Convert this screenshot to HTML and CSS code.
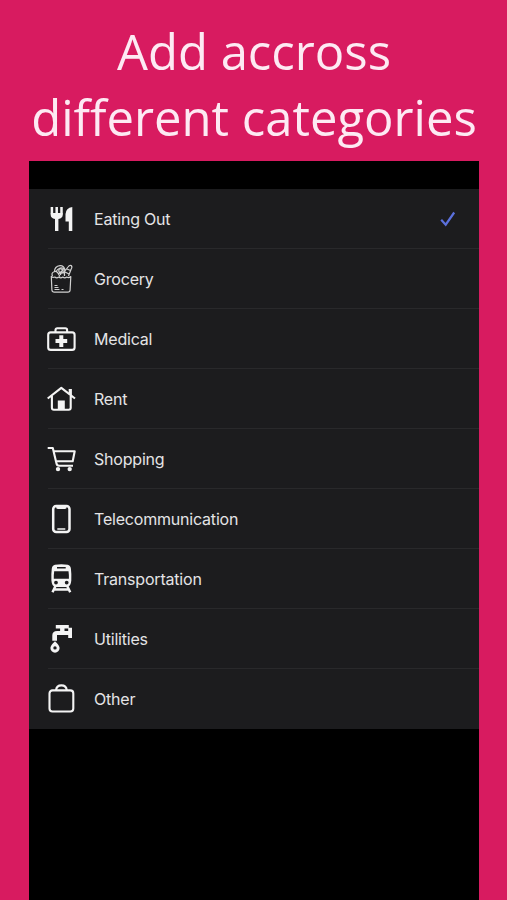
FILE: index.html
```html
<!DOCTYPE html>
<html lang="en">
<head>
<meta charset="utf-8">
<title>Categories</title>
<link rel="stylesheet" href="styles.css">
</head>
<body>
<main class="promo">
<h1 class="headline">Add accross<br>different categories</h1>
<section class="screen">
<ul class="list">
<li class="row">
<svg class="icon" viewBox="0 0 30 30"><path class="stroke heavy" d="M5.900 3V9q0 3.500 4.800 3.500T15.500 9V3M10.700 3V27"/><path class="fill" d="M4.700 9h12v2q0 3-4.300 4v12H9V15q-4.300-1-4.300-4zM26.300 3v24h-3.500V17.500h-3.300V10q.4-6 6.800-7z"/></svg>
<div class="cell"><span class="label">Eating Out</span><svg class="check" viewBox="0 0 16 16"><path d="M1.200 8.700l4.500 5L14.200 1.500"/></svg></div></li>
<li class="row">
<svg class="icon grocery" viewBox="0 0 30 30"><path class="stroke" d="M5.300 12.500l.6 13.500q.2 2.200 2.400 2.200h13.500q2.200 0 2.300-2.200l.7-13.500q-2 2-4 .5-2 1.700-4 0-2 1.700-4 0-2 1.700-4 0-2 1-3.500-.5zM6.500 12q-1.500-3 1.500-4.300 2-1 3.500.8l2.500 4M8.500 7.500q0-5 5.500-5.800Q18 1.500 19 6M10.500 7q2-4 6.500-1l-4.500 4M18.500 12V7.500L22 3q1.500-2.200 3.200-1.500 1.500 1.500-.2 4L22.500 12M21 5l3.500 1.500M19 8l4 2M14.500 11q0-3 2-3 2.500.5 2 4M8.500 21.500h3M8.500 23.500h4M8.500 25.500h5M15.500 25.500h2"/><circle class="stroke" cx="15.500" cy="6.500" r="2.700"/></svg>
<div class="cell"><span class="label">Grocery</span></div></li>
<li class="row">
<svg class="icon" viewBox="0 0 30 30"><rect class="stroke" x="2.200" y="8.400" width="26.400" height="17.500" rx="2.500"/><path class="stroke" d="M9.500 8V6q0-1.800 1.800-1.800h8q1.800 0 1.800 1.800v2"/><path class="fill" d="M13.300 11.300h4v3.700h3.900v4h-3.900v3.900h-4V19H9.500v-4h3.800z"/></svg>
<div class="cell"><span class="label">Medical</span></div></li>
<li class="row">
<svg class="icon" viewBox="0 0 30 30"><path class="stroke" d="M1.700 14.500L15.300 3.800l13.700 10.700M5.900 12v11.800q0 2 2 2h14.800q2 0 2-2V12"/><path class="fill" d="M11.800 16.500h7V26h-7zM22.700 5h3.200v6.500l-3.200-2.500z"/></svg>
<div class="cell"><span class="label">Rent</span></div></li>
<li class="row">
<svg class="icon" viewBox="0 0 30 30"><path class="stroke" d="M1.700 4h5.100l3.700 15.500q.4 2.200 2.500 2.200h14M8 7.200h20.700l-2 10H10.300"/><circle class="fill" cx="12" cy="25.100" r="2.200"/><circle class="fill" cx="23.700" cy="25.100" r="2.200"/></svg>
<div class="cell"><span class="label">Shopping</span></div></li>
<li class="row">
<svg class="icon" viewBox="0 0 30 30"><rect class="stroke heavy" x="7.200" y="2" width="16.300" height="26" rx="3"/><path class="fill" d="M10 2.500h10.700q0 2.500-1.800 2.500h-7Q10 5 10 2.500z"/><path class="stroke thin" d="M11.300 25h8"/></svg>
<div class="cell"><span class="label">Telecommunication</span></div></li>
<li class="row">
<svg class="icon" viewBox="0 0 30 30"><path class="fill" fill-rule="evenodd" d="M9 .8Q15.300-.1 21.700.8q2.700.5 3.200 3.700.7 5 .4 12-.4 5.500-3.900 6.500H9.300q-3.500-1-3.900-6.500-.3-7 .4-12Q6.300 1.300 9 .8zM11 3v1.500h8.700V3zM8.200 7.200q-.6 4-.4 7.600h15.100q.2-3.600-.4-7.600zM10 16.700a1.900 1.900 0 100 3.800 1.900 1.900 0 000-3.800zM20.700 16.700a1.900 1.900 0 100 3.800 1.900 1.900 0 000-3.800z"/><path class="stroke heavy" d="M9.500 22l-3 6.200M21.200 22l3 6.200M8.500 25.500h13.700"/></svg>
<div class="cell"><span class="label">Transportation</span></div></li>
<li class="row">
<svg class="icon" viewBox="0 0 30 30"><path class="fill" d="M9.800 1h13v3.500h-4.300V7h3.700V3.800h3.800V14h-3.800v-3H11v5.700H6.300v-5.200q0-4.500 4.800-4.500h3V4.500H9.800z"/><path class="fill" fill-rule="evenodd" d="M9 17.200q4.600 4 4.600 6.900a4.600 4.600 0 01-9.200 0q0-2.900 4.600-6.900zm0 5a1.700 1.700 0 100 3.400 1.700 1.700 0 000-3.400z"/></svg>
<div class="cell"><span class="label">Utilities</span></div></li>
<li class="row">
<svg class="icon" viewBox="0 0 30 30"><rect class="stroke" x="3.500" y="6.400" width="23.800" height="21.100" rx="3"/><path class="stroke" d="M10 6.300q.5-4.900 5.400-4.900t5.400 4.900"/></svg>
<div class="cell"><span class="label">Other</span></div></li>
</ul>
</section>
</main>
</body>
</html>
```
FILE: styles.css
```css
* { box-sizing: border-box; }
body { margin: 0; background: #d81b60; }
.promo { height: 900px; padding: 17.5px 28px 0 29px; display: flex; flex-direction: column; overflow: hidden; }
.headline { margin: 0 -20px; height: 143px; flex: none; font: 400 49px/66.5px "Open Sans", sans-serif; color: #fdeaf3; text-align: center; white-space: nowrap; }
.screen { flex: 1; background: #000; padding-top: 28.500px; }
.list { list-style: none; margin: 0; padding: 0; background: #1c1c1e; }
.row { height: 60px; display: flex; align-items: center; padding-left: 17px; }
.row:not(:last-child) { background: linear-gradient(#29292b, #29292b) 19px 100% / 100% 1px no-repeat; }
.icon { width: 30px; height: 30px; flex: none; overflow: visible; }
.stroke { fill: none; stroke: #f4f4f4; stroke-width: 2.1; stroke-linejoin: round; }
.heavy { stroke-width: 2.5; }
.thin { stroke-width: 1.5; }
.fill { fill: #f4f4f4; }
.grocery .stroke { stroke: #d0d0d0; stroke-width: 1.2; }
.cell { flex: 1; align-self: stretch; display: flex; align-items: center; justify-content: space-between; padding: 0 23px 0 18px; }
.label { font: 400 16px/20px Inter, sans-serif; letter-spacing: -0.2px; color: #e4e4e6; padding-bottom: 1px; }
.check { width: 16px; height: 16px; fill: none; stroke: #5b70dc; stroke-width: 2.2; }
```
